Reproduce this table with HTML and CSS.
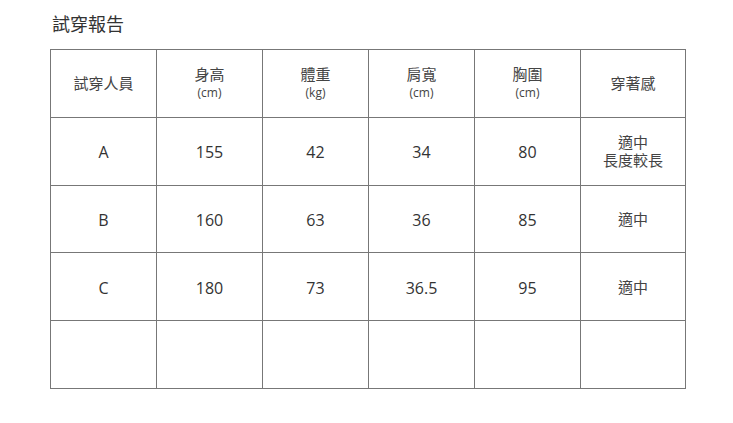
FILE: index.html
```html
<!DOCTYPE html>
<html lang="zh-Hant">
<head>
<meta charset="utf-8">
<link rel="stylesheet" href="styles.css">
</head>
<body>
<div class="page">
  <h1 class="title">試穿報告</h1>
  <table class="report">
    <colgroup>
      <col class="c"><col class="c"><col class="c"><col class="c"><col class="c"><col class="c last">
    </colgroup>
    <thead>
      <tr>
        <th><span class="zh">試穿人員</span></th>
        <th><span class="zh">身高</span><br><span class="unit">(cm)</span></th>
        <th><span class="zh">體重</span><br><span class="unit">(kg)</span></th>
        <th><span class="zh">肩寬</span><br><span class="unit">(cm)</span></th>
        <th><span class="zh">胸圍</span><br><span class="unit">(cm)</span></th>
        <th><span class="zh">穿著感</span></th>
      </tr>
    </thead>
    <tbody>
      <tr>
        <td>A</td><td>155</td><td>42</td><td>34</td><td>80</td>
        <td class="feel"><span class="zh">適中<br>長度較長</span></td>
      </tr>
      <tr>
        <td>B</td><td>160</td><td>63</td><td>36</td><td>85</td>
        <td class="feel"><span class="zh">適中</span></td>
      </tr>
      <tr>
        <td>C</td><td>180</td><td>73</td><td>36.5</td><td>95</td>
        <td class="feel"><span class="zh">適中</span></td>
      </tr>
      <tr>
        <td></td><td></td><td></td><td></td><td></td><td></td>
      </tr>
    </tbody>
  </table>
</div>
</body>
</html>
```

FILE: styles.css
```css
html, body {
  margin: 0;
  padding: 0;
  background: #ffffff;
}

body {
  font-family: "Open Sans", "Noto Sans CJK TC", sans-serif;
  color: #333333;
}

.page {
  padding: 10px 0 0 50px;
}

.title {
  margin: 0 0 13px 2px;
  font-size: 18px;
  font-weight: normal;
  line-height: 26px;
  color: #333333;
  font-family: "Noto Sans CJK TC", sans-serif;
}

.report {
  border-collapse: collapse;
  table-layout: fixed;
  width: 635px;
}

.report .c {
  width: 106px;
}

.report .c.last {
  width: 105px;
}

.report th,
.report td {
  border: 1px solid #777777;
  height: 66.8px;
  padding: 0;
  text-align: center;
  vertical-align: middle;
  font-weight: normal;
}

.report td {
  font-size: 16px;
  line-height: 18px;
  padding-top: 2px;
  height: 64.8px;
  color: #333333;
}

.report td.feel {
  padding-top: 0;
  height: 66.8px;
  line-height: 18px;
}

.report th {
  line-height: 17px;
}

.zh {
  font-family: "Noto Sans CJK TC", sans-serif;
  font-size: 15px;
  color: #444444;
}

.unit {
  font-size: 12px;
  color: #444444;
}
```
